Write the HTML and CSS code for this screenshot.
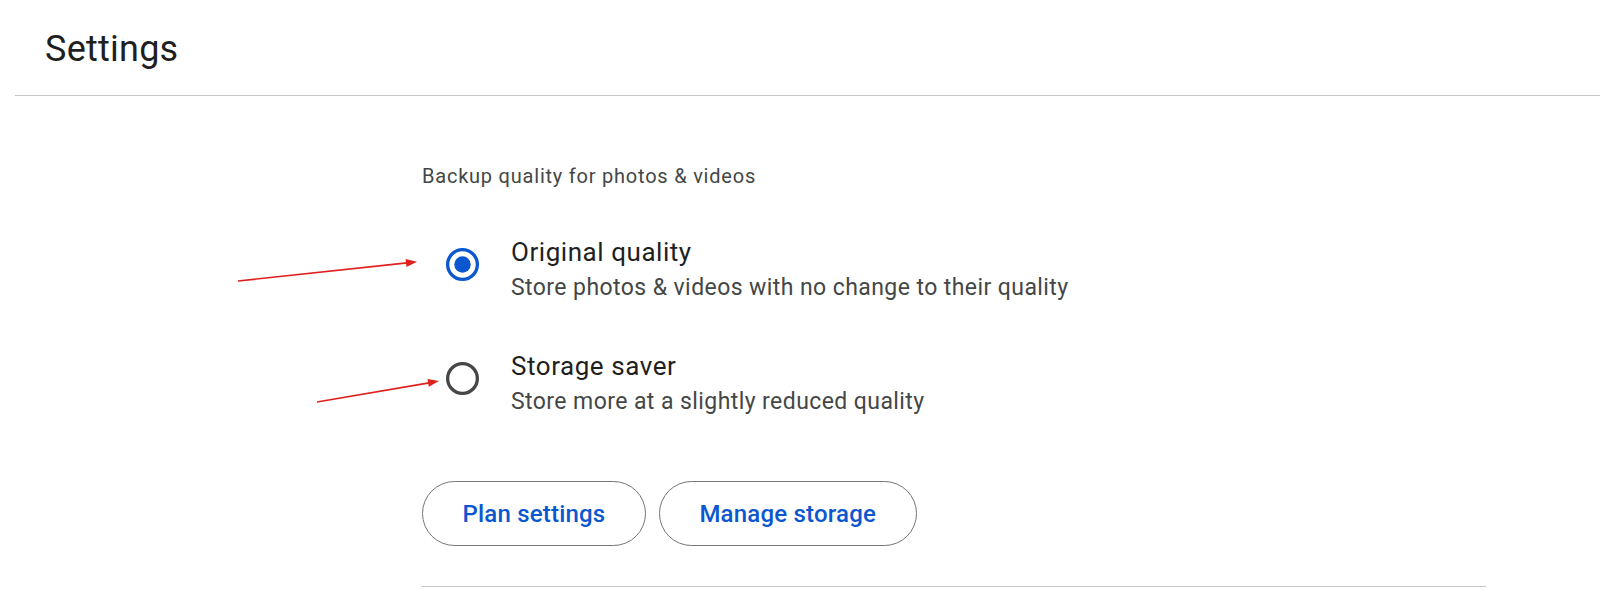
FILE: index.html
```html
<!DOCTYPE html>
<html lang="en">
<head>
<meta charset="utf-8">
<title>Settings</title>
<link rel="stylesheet" href="styles.css">
</head>
<body>
<header class="topbar">
  <h1 class="title">Settings</h1>
</header>
<main class="content">
  <section class="backup">
    <div class="label">Backup quality for photos &amp; videos</div>
    <div class="options">
      <div class="option">
        <span class="radio-cell">
          <svg class="radio" width="33" height="33" viewBox="0 0 20 20" aria-hidden="true">
            <circle cx="10" cy="10" r="9" fill="none" stroke="#0b57d0" stroke-width="2"/>
            <circle cx="10" cy="10" r="5" fill="#0b57d0"/>
          </svg>
        </span>
        <div class="option-text">
          <div class="option-title">Original quality</div>
          <div class="option-sub">Store photos &amp; videos with no change to their quality</div>
        </div>
      </div>
      <div class="option">
        <span class="radio-cell">
          <svg class="radio" width="33" height="33" viewBox="0 0 20 20" aria-hidden="true">
            <circle cx="10" cy="10" r="9" fill="none" stroke="#444746" stroke-width="2"/>
          </svg>
        </span>
        <div class="option-text">
          <div class="option-title">Storage saver</div>
          <div class="option-sub">Store more at a slightly reduced quality</div>
        </div>
      </div>
    </div>
    <div class="actions">
      <button class="pill">Plan settings</button>
      <button class="pill">Manage storage</button>
    </div>
  </section>
</main>
<svg class="annotations" width="1600" height="599" viewBox="0 0 1600 599" aria-hidden="true">
  <line x1="238" y1="281" x2="407" y2="262.9" stroke="#e0201c" stroke-width="1.6"/>
  <polygon points="417,261.7 406.5,266.9 405.6,258.9" fill="#e0201c"/>
  <line x1="317" y1="402" x2="429" y2="382.9" stroke="#e0201c" stroke-width="1.6"/>
  <polygon points="439,381 428.8,386.8 427.5,378.9" fill="#e0201c"/>
</svg>
</body>
</html>
```

FILE: styles.css
```css
html, body {
  margin: 0;
  padding: 0;
  background: #ffffff;
}

body {
  font-family: Roboto, "Liberation Sans", Arial, sans-serif;
  color: #1f1f1f;
  position: relative;
  min-height: 599px;
  overflow: hidden;
}

.topbar {
  margin-left: 15px;
  padding: 25px 0 22px 30px;
  border-bottom: 1px solid #c7c7c7;
}

.title {
  margin: 0;
  font-size: 36px;
  font-weight: 400;
  line-height: 48px;
  letter-spacing: 0.25px;
  color: #1f1f1f;
}

.content {
  padding: 66px 0 0 422px;
}

.backup {
  width: 1064px;
  padding-bottom: 40px;
  border-bottom: 1px solid #c7c7c7;
}

.label {
  font-size: 20px;
  line-height: 28px;
  color: #444746;
  letter-spacing: 0.78px;
}

.options {
  margin-top: 45px;
  display: flex;
  flex-direction: column;
  gap: 46px;
}

.option {
  display: flex;
  align-items: flex-start;
}

.radio-cell {
  flex: none;
  width: 89px;
  padding-top: 13px;
  box-sizing: border-box;
  padding-left: 24px;
  display: block;
  line-height: 0;
}

.radio {
  display: block;
}

.option-title {
  font-size: 26px;
  line-height: 34px;
  color: #1f1f1f;
  letter-spacing: 0.55px;
}

.option-sub {
  margin-top: 4px;
  font-size: 23px;
  line-height: 30px;
  color: #444746;
  letter-spacing: 0.42px;
}

.actions {
  margin-top: 64px;
  display: flex;
  gap: 13px;
}

.pill {
  height: 65px;
  box-sizing: border-box;
  padding: 0 39.5px;
  border: 1px solid #747775;
  border-radius: 33px;
  background: #ffffff;
  color: #0b57d0;
  font-family: Roboto, "Liberation Sans", Arial, sans-serif;
  font-size: 24px;
  font-weight: 500;
  letter-spacing: 0.2px;
  cursor: pointer;
}

.annotations {
  position: absolute;
  left: 0;
  top: 0;
  pointer-events: none;
}
```
